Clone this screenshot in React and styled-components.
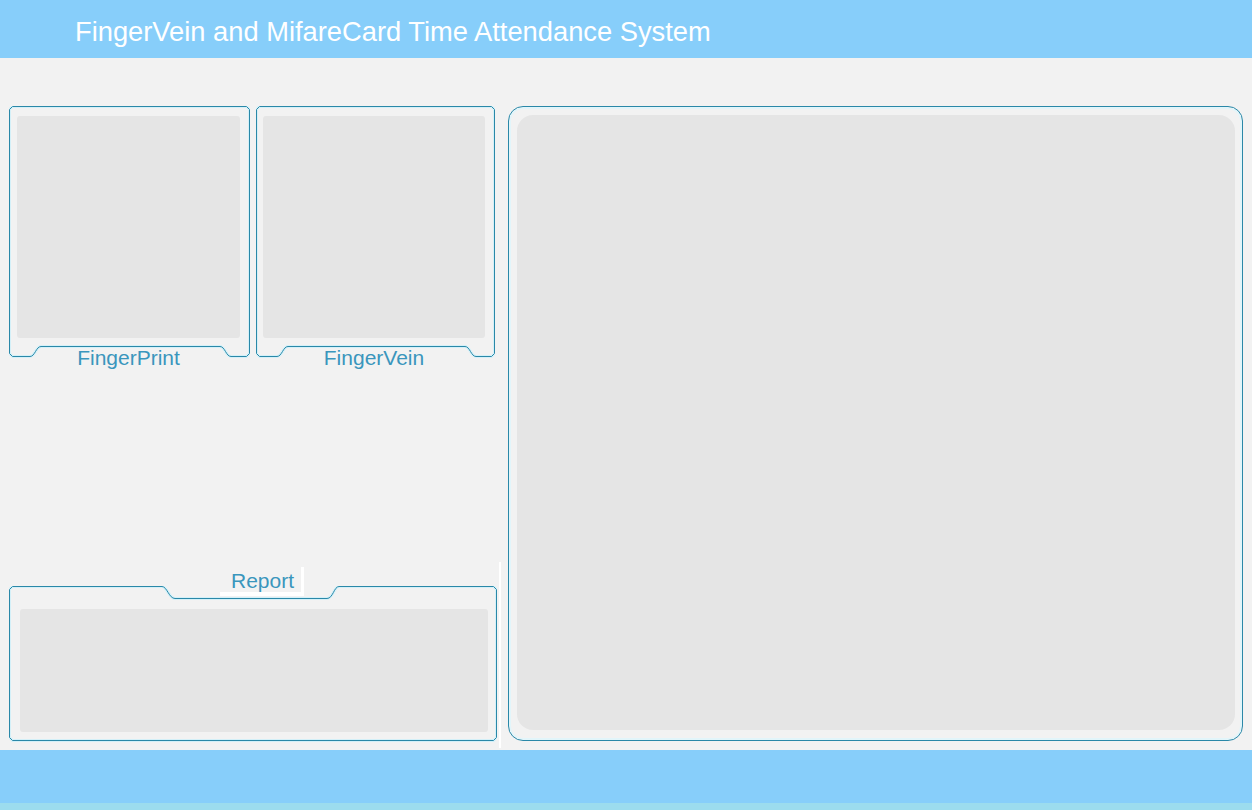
import React from 'react';
import styled, { createGlobalStyle } from 'styled-components';

const GlobalStyle = createGlobalStyle`
  html, body {
    margin: 0;
    padding: 0;
    background: #f2f2f2;
    font-family: "Liberation Sans", Arial, sans-serif;
  }
  * { box-sizing: border-box; }
`;

const Page = styled.div`
  width: 1252px;
  height: 810px;
  display: flex;
  flex-direction: column;
  background: #f2f2f2;
  overflow: hidden;
`;

const Header = styled.header`
  height: 58px;
  flex: none;
  display: flex;
  align-items: center;
  padding: 5px 0 0 75px;
  background: #87cefa;
  color: #ffffff;
  font-size: 27.3px;
`;

const Main = styled.main`
  height: 692px;
  flex: none;
  display: flex;
  align-items: flex-start;
  padding: 48px 9px 2px 9px;
`;

const LeftColumn = styled.div`
  width: 492px;
  height: 100%;
  display: flex;
  flex-direction: column;
  justify-content: space-between;
`;

const SensorRow = styled.div`
  display: flex;
  gap: 6px;
`;

const Sensor = styled.div`
  position: relative;
  width: ${({ $width }) => $width}px;
  height: 252px;
  display: flex;
  flex-direction: column;
  align-items: center;
  padding: 10px 10px 0 ${({ $inset }) => $inset}px;
`;

const FrameSvg = styled.svg`
  position: absolute;
  inset: 0;
  pointer-events: none;
`;

const Screen = styled.div`
  position: relative;
  flex: none;
  align-self: stretch;
  height: 222px;
  border-radius: 3px;
  background: #e5e5e5;
`;

const Caption = styled.div`
  position: relative;
  flex: none;
  margin-top: 9px;
  font-size: 21px;
  line-height: 22px;
  color: #3a96bd;
  white-space: nowrap;
`;

const ReportSection = styled.div`
  height: 186px;
  padding-top: 5px;
  border-right: 2px solid #ffffff;
`;

const ReportLabel = styled.div`
  position: relative;
  z-index: 1;
  width: 84px;
  height: 29px;
  margin: 0 0 -10px 211px;
  padding: 3px 0 0 11px;
  border-right: 3px solid #ffffff;
  border-bottom: 4px solid #ffffff;
  font-size: 21px;
  line-height: 22px;
  color: #3a96bd;
`;

const ReportFrame = styled.div`
  position: relative;
  width: 488px;
  height: 156px;
  padding: 23px 9px 10px 11px;
`;

const ReportScreen = styled.div`
  position: relative;
  height: 100%;
  border-radius: 3px;
  background: #e5e5e5;
`;

const ViewPanel = styled.div`
  width: 735px;
  height: 635px;
  margin-left: 7px;
  padding: 8px 7px 10px 8px;
  border: 1px solid #2a88a8;
  border-radius: 15px;
  box-shadow: inset 0 0 0 2px #e2f5fa;
`;

const ViewScreen = styled.div`
  height: 100%;
  border-radius: 16px;
  background: #e5e5e5;
`;

const Footer = styled.footer`
  flex: none;
  height: 60px;
  background: #87cefa;
  border-bottom: 7px solid #9cdcee;
`;

const sensorPath = (w) => {
  const r = w - 0.5;
  return `M3.5,0.5 H${r - 3} L${r},3.5 V247.5 L${r - 3},250.5 H${w - 19} C${w - 24},250.5 ${w - 25},240.5 ${w - 30},240.5 H32 C27,240.5 26,250.5 21,250.5 H3.5 L0.5,247.5 V3.5 Z`;
};

const reportPath =
  'M3.5,0.5 H153 C158,0.5 160,12.5 166,12.5 H318 C324,12.5 325,0.5 330,0.5 H484.5 L487.5,3.5 V151.5 L484.5,154.5 H3.5 L0.5,151.5 V3.5 Z';

const Frame = ({ d, width, height }) => (
  <FrameSvg width={width} height={height} viewBox={`0 0 ${width} ${height}`}>
    <path d={d} fill="none" stroke="#d4f0f8" strokeWidth="3" />
    <path d={d} fill="none" stroke="#2a88a8" strokeWidth="1" />
  </FrameSvg>
);

const SensorPanel = ({ width, inset, label }) => (
  <Sensor $width={width} $inset={inset}>
    <Frame d={sensorPath(width)} width={width} height={252} />
    <Screen />
    <Caption>{label}</Caption>
  </Sensor>
);

const App = () => (
  <Page>
    <GlobalStyle />
    <Header>FingerVein and MifareCard Time Attendance System</Header>
    <Main>
      <LeftColumn>
        <SensorRow>
          <SensorPanel width={241} inset={8} label="FingerPrint" />
          <SensorPanel width={239} inset={7} label="FingerVein" />
        </SensorRow>
        <ReportSection>
          <ReportLabel>Report</ReportLabel>
          <ReportFrame>
            <Frame d={reportPath} width={488} height={156} />
            <ReportScreen />
          </ReportFrame>
        </ReportSection>
      </LeftColumn>
      <ViewPanel>
        <ViewScreen />
      </ViewPanel>
    </Main>
    <Footer />
  </Page>
);

export default App;
